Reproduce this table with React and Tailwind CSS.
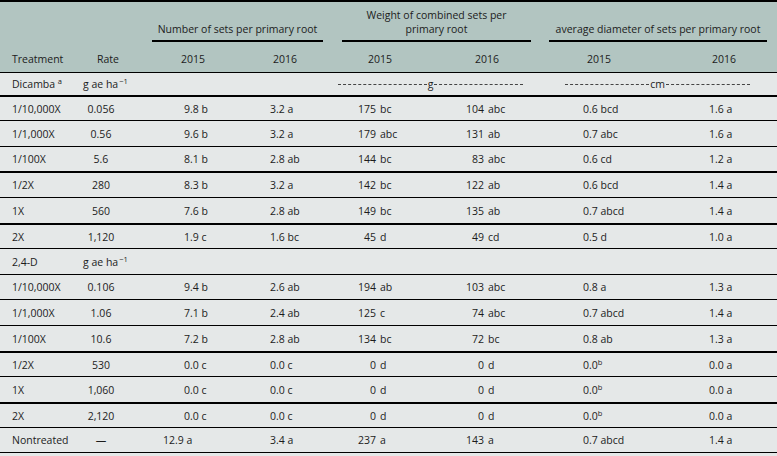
const W = [70, 62, 108, 90, 90, 120, 120, 117];

const dicamba = [
  ["1/10,000X", "0.056", "9.8 b", "3.2 a", ["175", "bc"], ["104", "abc"], "0.6 bcd", "1.6 a"],
  ["1/1,000X", "0.56", "9.6 b", "3.2 a", ["179", "abc"], ["131", "ab"], "0.7 abc", "1.6 a"],
  ["1/100X", "5.6", "8.1 b", "2.8 ab", ["144", "bc"], ["83", "abc"], "0.6 cd", "1.2 a"],
  ["1/2X", "280", "8.3 b", "3.2 a", ["142", "bc"], ["122", "ab"], "0.6 bcd", "1.4 a"],
  ["1X", "560", "7.6 b", "2.8 ab", ["149", "bc"], ["135", "ab"], "0.7 abcd", "1.4 a"],
  ["2X", "1,120", "1.9 c", "1.6 bc", ["45", "d"], ["49", "cd"], "0.5 d", "1.0 a"],
];

const twoFourD = [
  ["1/10,000X", "0.106", "9.4 b", "2.6 ab", ["194", "ab"], ["103", "abc"], "0.8 a", "1.3 a"],
  ["1/1,000X", "1.06", "7.1 b", "2.4 ab", ["125", "c"], ["74", "abc"], "0.7 abcd", "1.4 a"],
  ["1/100X", "10.6", "7.2 b", "2.8 ab", ["134", "bc"], ["72", "bc"], "0.8 ab", "1.3 a"],
  ["1/2X", "530", "0.0 c", "0.0 c", ["0", "d"], ["0", "d"], "sup", "0.0 a"],
  ["1X", "1,060", "0.0 c", "0.0 c", ["0", "d"], ["0", "d"], "sup", "0.0 a"],
  ["2X", "2,120", "0.0 c", "0.0 c", ["0", "d"], ["0", "d"], "sup", "0.0 a"],
];

// heights / line thickness taken from the picture
const dicambaLayout = [
  [23, false],
  [25, false],
  [24, true],
  [24, false],
  [25, true],
  [23, false],
];
const twoFourLayout = [
  [24, false],
  [25, false],
  [25, true],
  [23, false],
  [25, true],
  [23, false],
];

const Unit = () => (
  <span>
    g ae ha<sup className="text-[7.5px] top-[-4px] ml-[1px]">−1</sup>
  </span>
);

const Weight = ({ v, box }) => (
  <div className="flex">
    <span className="text-right" style={{ width: box }}>
      {v[0]}
    </span>
    <span className="pl-[4px]">{v[1]}</span>
  </div>
);

const DataRow = ({ r, h, thick, nonTreated }) => (
  <div
    className={`flex items-center border-b border-black ${thick ? "border-b-2" : ""}`}
    style={{ height: h + (thick ? 2 : 1) }}
  >
    <div className="w-[70px] pl-[12px] shrink-0">{r[0]}</div>
    <div className="w-[62px] shrink-0 text-center">{r[1]}</div>
    <div className={`w-[108px] shrink-0 ${nonTreated ? "pl-[31px]" : "pl-[52px]"}`}>{r[2]}</div>
    <div className="w-[90px] shrink-0 pl-[30px]">{r[3]}</div>
    <div className="w-[90px] shrink-0">
      <Weight v={r[4]} box={46} />
    </div>
    <div className="w-[120px] shrink-0">
      <Weight v={r[5]} box={64} />
    </div>
    <div className="w-[120px] shrink-0 pl-[43px]">
      {r[6] === "sup" ? (
        <span>
          0.0<sup className="text-[7.5px] top-[-4px]">b</sup>
        </span>
      ) : (
        r[6]
      )}
    </div>
    <div className="w-[117px] shrink-0 pl-[49px]">{r[7]}</div>
  </div>
);

const Dashed = ({ label, ml, mr }) => (
  <div className="flex items-center w-full" style={{ paddingLeft: ml, paddingRight: mr }}>
    <div className="flex-1 border-t border-dashed border-[#444]" />
    <span className="px-[1px] leading-none">{label}</span>
    <div className="flex-1 border-t border-dashed border-[#444]" />
  </div>
);

const App = () => {
  return (
    <div
      className="w-[777px] h-[456px] overflow-hidden bg-[#e5e8e8] text-[#1c1c1c] text-[10.5px] leading-[14px]"
      style={{ fontFamily: '"Open Sans", "Liberation Sans", sans-serif' }}
    >
      {/* header */}
      <div className="bg-[#b2c5c1] border-t-2 border-black border-b border-b-black">
        <div className="flex items-end h-[38px] pb-[4px]">
          <div className="ml-[152px] w-[171px] text-center">Number of sets per primary root</div>
          <div className="ml-[19px] w-[189px] text-center px-[20px]">Weight of combined sets per primary root</div>
          <div className="ml-[18px] w-[218px] text-center">average diameter of sets per primary root</div>
        </div>
        <div className="flex h-[2px]">
          <div className="ml-[152px] w-[171px] bg-black" />
          <div className="ml-[19px] w-[189px] bg-black" />
          <div className="ml-[18px] w-[218px] bg-black" />
        </div>
        <div className="flex items-end h-[30px] pb-[6px]">
          <div className="w-[70px] pl-[12px]">Treatment</div>
          <div className="w-[62px] text-center pl-[14px]">Rate</div>
          <div className="w-[108px] pl-[49px]">2015</div>
          <div className="w-[90px] pl-[33px]">2016</div>
          <div className="w-[90px] pl-[38px]">2015</div>
          <div className="w-[120px] pl-[55px]">2016</div>
          <div className="w-[120px] pl-[47px]">2015</div>
          <div className="w-[117px] pl-[52px]">2016</div>
        </div>
      </div>

      {/* Dicamba */}
      <div className="flex items-center h-[24px] border-b-2 border-black">
        <div className="w-[70px] pl-[12px] shrink-0">
          Dicamba <sup className="text-[7.5px] top-[-4px]">a</sup>
        </div>
        <div className="w-[62px] shrink-0 pl-[13px]">
          <Unit />
        </div>
        <div className="w-[198px] shrink-0" />
        <div className="w-[210px] shrink-0">
          <Dashed label="g" ml={8} mr={17} />
        </div>
        <div className="w-[237px] shrink-0">
          <Dashed label="cm" ml={25} mr={27} />
        </div>
      </div>
      {dicamba.map((r, i) => (
        <DataRow key={r[0]} r={r} h={dicambaLayout[i][0]} thick={dicambaLayout[i][1]} />
      ))}

      {/* 2,4-D */}
      <div className="flex items-center h-[26px] border-b border-black">
        <div className="w-[70px] pl-[12px] shrink-0">2,4-D</div>
        <div className="w-[62px] shrink-0 pl-[13px]">
          <Unit />
        </div>
      </div>
      {twoFourD.map((r, i) => (
        <DataRow key={"d" + r[0]} r={r} h={twoFourLayout[i][0]} thick={twoFourLayout[i][1]} />
      ))}
      <DataRow
        r={["Nontreated", "—", "12.9 a", "3.4 a", ["237", "a"], ["143", "a"], "0.7 abcd", "1.4 a"]}
        h={24}
        thick={false}
        nonTreated
      />
    </div>
  );
};

export default App;
